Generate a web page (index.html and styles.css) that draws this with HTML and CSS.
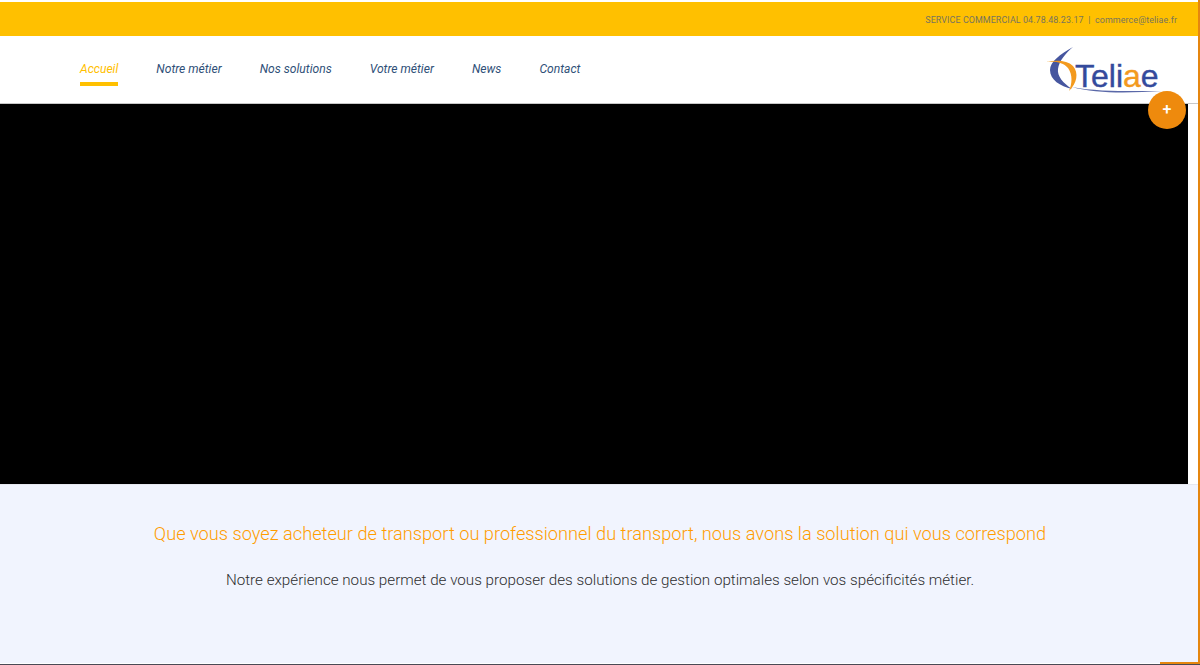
FILE: index.html
```html
<!DOCTYPE html>
<html lang="fr">
<head>
<meta charset="utf-8">
<title>Teliae</title>
<link rel="stylesheet" href="styles.css">
</head>
<body>
<div class="page">
  <div class="topbar">
    <span class="topbar-text">SERVICE COMMERCIAL 04.78.48.23.17 &nbsp;|&nbsp; commerce@teliae.fr</span>
  </div>
  <header class="header">
    <nav class="nav">
      <a class="nav-link active">Accueil</a>
      <a class="nav-link">Notre métier</a>
      <a class="nav-link">Nos solutions</a>
      <a class="nav-link">Votre métier</a>
      <a class="nav-link">News</a>
      <a class="nav-link">Contact</a>
    </nav>
    <div class="logo">
      <svg class="logo-mark" viewBox="0 0 117 48" width="117" height="48" aria-hidden="true">
        <path d="M27 1 C14 8 4 16 4 24 C4 34 14 40 26 43 C17 37 11 30 12 23 C13 15 20 7 27 1 Z" fill="#46569f"/>
        <path d="M0 16 C9 15 17 16 22 22 C27 29 26 38 23 45 C31 37 33 27 27 20 C21 14 10 14 0 16 Z" fill="#f39a1e"/>
        <path d="M26 41 C50 48 85 47 116 45 C85 45 52 46 26 41 Z" fill="#5a68a8"/>
      </svg>
      <span class="logo-text">Teli<span class="logo-a">a</span>e</span>
    </div>
  </header>
  <section class="hero"></section>
  <section class="intro">
    <h1 class="intro-title">Que vous soyez acheteur de transport ou professionnel du transport, nous avons la solution qui vous correspond</h1>
    <p class="intro-text">Notre expérience nous permet de vous proposer des solutions de gestion optimales selon vos spécificités métier.</p>
  </section>
  <button class="fab">+</button>
  <div class="edge-right"></div>
  <div class="edge-bottom"></div>
</div>
</body>
</html>
```
FILE: styles.css
```css
* { box-sizing: border-box; }
html, body { margin: 0; height: 100%; overflow: hidden; background: #fff; }
body { font-family: Roboto, sans-serif; }
.page { position: relative; width: 1200px; height: 665px; padding: 2px 12px 1px 0; display: flex; flex-direction: column; border-bottom: 1px solid #4a4a55; }
.topbar { height: 34px; margin-right: -10px; padding: 1px 21px 0 0; background: #ffc000; display: flex; align-items: center; justify-content: flex-end; }
.topbar-text { font-size: 8.9px; color: #77745f; letter-spacing: 0.1px; }
.header { height: 68px; margin-right: -10px; display: flex; align-items: flex-start; justify-content: space-between; padding: 10px 35px 0 80px; border-bottom: 1px solid #c8c8c8; }
.nav { display: flex; gap: 38px; margin-top: 7px; }
.nav-link { font-size: 12.1px; font-weight: 400; font-style: italic; color: #2f5078; line-height: 16px; padding: 8px 0 5px; border-bottom: 4px solid transparent; }
.nav-link.active { color: #ffc000; border-bottom-color: #ffc000; }
.logo { position: relative; width: 117px; height: 48px; }
.logo-mark { display: block; }
.logo-text { position: absolute; left: 29px; top: 13px; font-family: "Liberation Sans", sans-serif; font-size: 32px; line-height: 34px; color: #344a9c; -webkit-text-stroke: 0.4px #344a9c; }
.logo-a { color: #f39a1e; -webkit-text-stroke: 0.4px #f39a1e; }
.hero { height: 380px; width: 1188px; background: #000; }
.intro { flex: 1; margin-right: -12px; background: #f1f4fe; border-top: 1px solid #e6e8f0; text-align: center; padding-top: 37px; }
.intro-title { margin: 0; font-size: 18.22px; line-height: 24px; font-weight: 300; color: #ff9c00; }
.intro-text { margin: 23px 0 0; font-size: 15.2px; line-height: 22px; font-weight: 300; color: #2e2e2e; }
.fab { position: absolute; left: 1148px; top: 91px; width: 38px; height: 38px; border: 0; border-radius: 50%; background: #ee8a0d; color: #fff; font: 500 16px/38px Roboto, sans-serif; padding: 0; }
.edge-right { position: absolute; left: 1198px; top: 0; bottom: 0; width: 1.5px; background: #e5860f; }
.edge-bottom { position: absolute; left: 1160px; width: 39px; bottom: 0; height: 2px; background: #e5860f; }
```
